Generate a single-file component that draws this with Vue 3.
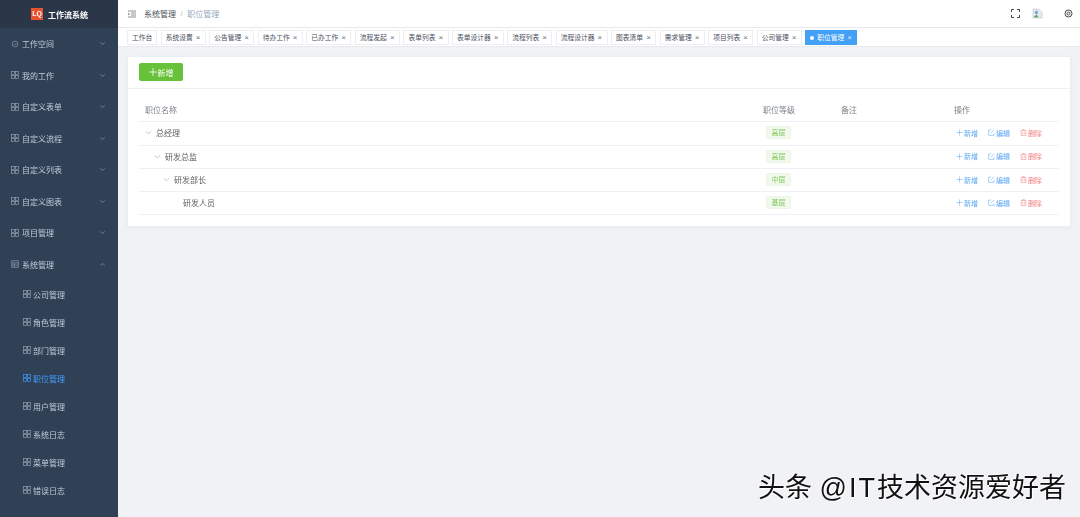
<script setup>
const menus = [
  { name: '工作空间', icon: 'shield' },
  { name: '我的工作', icon: 'grid' },
  { name: '自定义表单', icon: 'grid' },
  { name: '自定义流程', icon: 'grid' },
  { name: '自定义列表', icon: 'grid' },
  { name: '自定义图表', icon: 'grid' },
  { name: '项目管理', icon: 'grid' },
  { name: '系统管理', icon: 'table', open: true }
]
const subs = ['公司管理', '角色管理', '部门管理', '职位管理', '用户管理', '系统日志', '菜单管理', '错误日志']
const tabs = ['系统设置', '公告管理', '待办工作', '已办工作', '流程发起', '表单列表', '表单设计器', '流程列表', '流程设计器', '图表清单', '需求管理', '项目列表', '公司管理']
const rows = [
  { name: '总经理', level: 0, tag: '高层', arrow: true },
  { name: '研发总监', level: 1, tag: '高层', arrow: true },
  { name: '研发部长', level: 2, tag: '中层', arrow: true },
  { name: '研发人员', level: 3, tag: '基层', arrow: false }
]
const indentStyle = (level) => ({ paddingLeft: 6 + level * 9 + 'px' })
</script>

<template>
  <div class="app">
    <aside class="side">
      <div class="brand">
        <span class="logo">LQ</span>
        <span class="brand-name">工作流系统</span>
      </div>
      <div v-for="m in menus" :key="m.name" class="menu">
        <svg v-if="m.icon === 'shield'" class="mi" viewBox="0 0 10 10"><circle cx="5" cy="5" r="3.6" /><path d="M3.4 5l1.2 1.2 2-2.2" /></svg>
        <svg v-else-if="m.icon === 'table'" class="mi" viewBox="0 0 10 10"><rect x="1" y="1" width="8" height="8" /><path d="M1 3.7h8M1 6.3h8M4 3.7v5.3" /></svg>
        <svg v-else class="mi" viewBox="0 0 10 10"><rect x=".8" y=".8" width="3.4" height="3.4" /><rect x="5.8" y=".8" width="3.4" height="3.4" /><rect x=".8" y="5.8" width="3.4" height="3.4" /><rect x="5.8" y="5.8" width="3.4" height="3.4" /></svg>
        <span class="mname">{{ m.name }}</span>
        <svg class="chev" viewBox="0 0 8 8"><path :d="m.open ? 'M1.5 5.2L4 2.8l2.5 2.4' : 'M1.5 2.8L4 5.2l2.5-2.4'" /></svg>
      </div>
      <div v-for="s in subs" :key="s" class="sub" :class="{ on: s === '职位管理' }">
        <svg class="mi" viewBox="0 0 10 10"><rect x=".8" y=".8" width="3.4" height="3.4" /><rect x="5.8" y=".8" width="3.4" height="3.4" /><rect x=".8" y="5.8" width="3.4" height="3.4" /><rect x="5.8" y="5.8" width="3.4" height="3.4" /></svg>
        <span>{{ s }}</span>
      </div>
    </aside>

    <div class="right">
      <header class="top">
        <svg class="burger" viewBox="0 0 8 8"><path d="M0 1h8M3 3h5M3 5h5M0 7h8M0 3l1.5 1L0 5" /></svg>
        <span class="crumb">系统管理</span>
        <span class="slash">/</span>
        <span class="crumb cur">职位管理</span>
        <div class="tools">
          <svg class="full" viewBox="0 0 9 9"><path d="M.5 3V.5H3M6 .5h2.500V3M8.500 6v2.500H6M3 8.500H.5V6" /></svg>
          <svg class="broken" viewBox="0 0 10 10"><path d="M1 1h5l3 3v5H1z" fill="#e6ebee" stroke="#b7c0c6" stroke-width=".6" /><circle cx="4" cy="4" r="1.500" fill="#6fa4d8" /><path d="M1.500 8.500L4 6l2 2.500z" fill="#5c9d55" /></svg>
          <svg class="gear" viewBox="0 0 10 10"><circle cx="5" cy="5" r="3.900" /><circle cx="5" cy="5" r="1.600" /></svg>
        </div>
      </header>

      <nav class="tagbar">
        <span class="tab">工作台</span>
        <span v-for="t in tabs" :key="t" class="tab">{{ t }}<i class="x">×</i></span>
        <span class="tab active"><b class="dot"></b>职位管理<i class="x">×</i></span>
      </nav>

      <main class="main">
        <section class="card">
          <div class="card-head">
            <button class="add"><svg class="plus" viewBox="0 0 8 8"><path d="M4 0v8M0 4h8" /></svg>新增</button>
          </div>
          <div class="card-body">
            <div class="tr th">
              <div class="c-name">职位名称</div>
              <div class="c-level">职位等级</div>
              <div class="c-note">备注</div>
              <div class="c-op">操作</div>
            </div>
            <div v-for="r in rows" :key="r.name" class="tr">
              <div class="c-name td-name" :style="indentStyle(r.level)">
                <svg class="arrow" :class="{ ghost: !r.arrow }" viewBox="0 0 8 8"><path d="M1 2.800L4 5.400l3-2.600" /></svg>
                <span>{{ r.name }}</span>
              </div>
              <div class="c-level"><span class="tag">{{ r.tag }}</span></div>
              <div class="c-note"></div>
              <div class="c-op ops">
                <span class="op blue"><svg class="oi" viewBox="0 0 8 8"><path d="M4 .5v7M.5 4h7" /></svg>新增</span>
                <span class="op blue"><svg class="oi" viewBox="0 0 8 8"><path d="M6.800 4.500v2.800H.7V1.200h3M3.300 4.700L7 1" /></svg>编辑</span>
                <span class="op red"><svg class="oi" viewBox="0 0 8 8"><path d="M1.300 1.800h5.400v5.700H1.300zM3 1.800V.6h2v1.200M3 3.500v2.500M5 3.500v2.500" /></svg>删除</span>
              </div>
            </div>
          </div>
        </section>
      </main>
    </div>

    <div class="mark">头条 <span class="latin">@IT</span>技术资源爱好者</div>
  </div>
</template>

<style>
html, body { margin: 0; background: #f0f2f5; }
</style>

<style scoped>
.app {
  position: relative;
  display: flex;
  width: 1080px;
  height: 517px;
  overflow: hidden;
  font-family: "Liberation Sans", "Noto Sans CJK SC", sans-serif;
  background: #f0f2f5;
}
.side { width: 118px; flex: none; background: #304156; color: #bfcbd9; font-size: 8px; filter: blur(.3px); }
.brand { height: 28px; background: #2b3648; display: flex; align-items: center; padding-left: 31px; gap: 5px; }
.logo { width: 12px; height: 12px; background: #e8522e; color: #fff; font-size: 7px; font-weight: 700; line-height: 12px; text-align: center; }
.brand-name { color: #fff; font-weight: 700; font-size: 8px; }
.menu { height: 31.5px; display: flex; align-items: center; padding: 0 12px 0 11px; }
.mi { width: 8px; height: 8px; flex: none; margin-right: 3px; fill: none; stroke: #97a4b4; stroke-width: .8; }
.mname { flex: 1; }
.chev { width: 7px; height: 7px; fill: none; stroke: #8d9aaa; stroke-width: .8; }
.sub { height: 28px; display: flex; align-items: center; padding-left: 23px; }
.sub .mi { margin-right: 2px; }
.sub.on { color: #409eff; }
.sub.on .mi { stroke: #409eff; }
.right { flex: 1; min-width: 0; display: flex; flex-direction: column; filter: blur(.3px); }
.top { height: 28px; box-sizing: border-box; background: #fff; border-bottom: 1px solid #e6e9ee; display: flex; align-items: center; padding-left: 10px; font-size: 8px; color: #4a4f57; }
.burger { width: 8px; height: 8px; margin-right: 8px; fill: none; stroke: #5a5e66; stroke-width: .7; }
.slash { margin: 0 4.500px; color: #b4bccc; }
.crumb.cur { color: #97a8be; }
.tools { margin-left: auto; display: flex; align-items: center; padding-right: 7px; }
.full { width: 9px; height: 9px; fill: none; stroke: #333; stroke-width: .9; }
.broken { width: 11px; height: 11px; margin-left: 12px; }
.gear { width: 9px; height: 9px; margin-left: 21px; fill: none; stroke: #333; stroke-width: 1; }
.tagbar { height: 19px; box-sizing: border-box; background: #fff; border-bottom: 1px solid #e8eaee; display: flex; align-items: center; gap: 3.4px; padding: 1px 0 0 9px; }
.tab { height: 15px; box-sizing: border-box; border: 1px solid #eceef2; padding: 0 4px; display: flex; align-items: center; font-size: 6.750px; line-height: 13px; color: #495060; white-space: nowrap; background: #fff; }
.tab .x { font-style: normal; margin-left: 2.650px; width: 5.500px; font-size: 8px; color: #6b7280; text-align: center; }
.tab.active { background: #42a0f6; border-color: #42a0f6; color: #fff; }
.tab.active .x { color: #dcecfb; }
.dot { width: 4px; height: 4px; border-radius: 50%; background: #fff; margin-right: 3px; }
.main { flex: 1; padding: 9px 9px 0; }
.card { background: #fff; border: 1px solid #ebeef2; border-radius: 2px; box-sizing: border-box; height: 171px; box-shadow: 0 1px 4px rgba(0, 0, 0, .04); }
.card-head { height: 32px; box-sizing: border-box; padding: 6px 11px; border-bottom: 1px solid #eef0f3; }
.add { height: 18px; width: 44px; padding: 0; border: 0; border-radius: 2px; background: #67c23a; color: #fff; font: inherit; font-size: 8px; display: flex; align-items: center; justify-content: center; gap: 1px; }
.plus { width: 8px; height: 8px; fill: none; stroke: #fff; stroke-width: .8; }
.card-body { padding: 10px 11px 0; font-size: 8px; color: #606266; }
.tr { display: flex; height: 23.300px; box-sizing: border-box; align-items: center; padding-bottom: 1px; border-bottom: 1px solid #eef0f4; }
.th { color: #7d8188; }
.c-name { width: 624px; box-sizing: border-box; padding-left: 6px; }
.c-level { width: 78px; }
.c-note { width: 113px; }
.c-op { flex: 1; }
.td-name { display: flex; align-items: center; }
.arrow { width: 7px; height: 7px; margin-right: 4px; flex: none; fill: none; stroke: #a8adb5; stroke-width: .8; }
.arrow.ghost { visibility: hidden; }
.tag { display: inline-block; margin-left: 3px; width: 25px; height: 13px; line-height: 12px; box-sizing: border-box; text-align: center; font-size: 7px; color: #7fc75c; background: #f0f9eb; border: 1px solid #ecf6e4; border-radius: 2px; }
.ops { display: flex; gap: 10px; padding-left: 2px; font-size: 7px; }
.op { display: flex; align-items: center; gap: 1px; white-space: nowrap; }
.oi { width: 7px; height: 7px; fill: none; stroke: currentColor; stroke-width: .6; }
.blue { color: #5aa6f5; }
.red { color: #f27c7c; }
.mark { position: absolute; left: 758px; top: 471px; font-size: 27px; line-height: 34px; color: #111; white-space: nowrap; text-shadow: 1px 1px 0 #fff, -1px -1px 0 rgba(255,255,255,.7); font-family: "Liberation Sans", "Noto Sans CJK SC", sans-serif; }
.latin { letter-spacing: 2px; }
</style>
